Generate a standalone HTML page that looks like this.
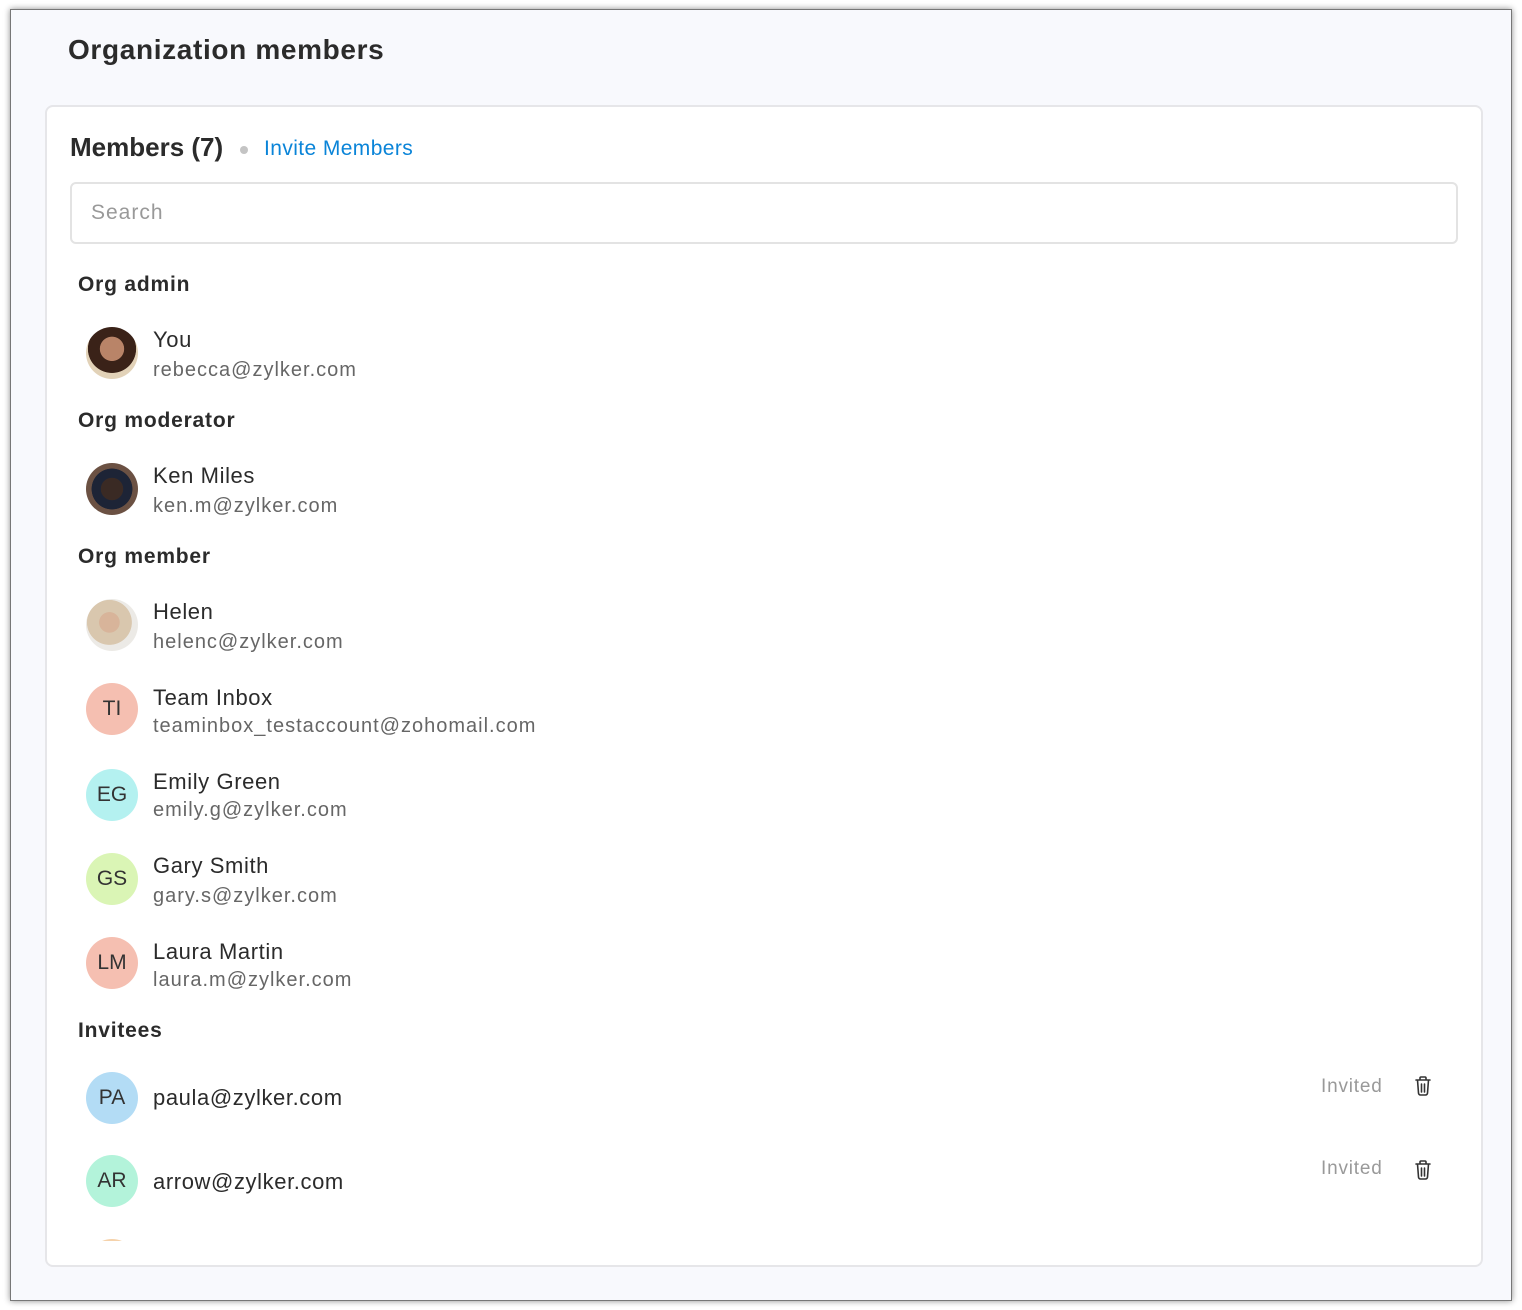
<!DOCTYPE html>
<html><head><meta charset="utf-8"><style>
*{margin:0;padding:0;box-sizing:border-box}
body{width:1522px;height:1310px;background:#fff;font-family:"Liberation Sans",sans-serif;position:relative;overflow:hidden;color:#222}
.win{position:absolute;left:10px;top:9px;width:1502px;height:1292px;background:#f8f9fd;border:1px solid #777;box-shadow:0 0 6px rgba(0,0,0,.45)}
.card{position:absolute;left:45px;top:105px;width:1438px;height:1162px;background:#fff;border:2px solid #e6e6e9;border-radius:8px;overflow:hidden}
.a{position:absolute;white-space:nowrap}
.h1{font-size:28px;font-weight:bold;color:#2b2b2b;letter-spacing:0.65px}
.sec{font-size:21px;font-weight:bold;color:#2b2b2b;letter-spacing:0.8px}
.av{position:absolute;left:86px;width:52px;height:52px;border-radius:50%;font-size:21px;color:#333;display:flex;align-items:center;justify-content:center}
.nm{font-size:22px;color:#2b2b2b;letter-spacing:0.6px}
.em{font-size:20px;color:#666;letter-spacing:1px}
.inv{font-size:19px;color:#999;letter-spacing:0.8px}
</style></head><body>
<div class="win"></div>
<div class="a h1" style="left:68px;top:34px">Organization members</div>
<div class="card"></div>
<div style="position:absolute;left:47px;top:107px;width:1434px;height:1134px;overflow:hidden">
<div style="position:absolute;left:-47px;top:-107px;width:1522px;height:1310px">
<div class="a" style="left:70px;top:132px;font-size:26px;font-weight:bold;color:#2b2b2b">Members (7)</div>
<div class="a" style="left:240px;top:146px;width:8px;height:8px;border-radius:50%;background:#c4c4c4"></div>
<div class="a" style="left:264px;top:137px;font-size:21px;color:#0a84d8;letter-spacing:0.4px">Invite Members</div>
<div class="a" style="left:70px;top:182px;width:1388px;height:62px;border:2px solid #e3e3e3;border-radius:6px"></div>
<div class="a" style="left:91px;top:201px;font-size:21px;color:#999;letter-spacing:1px">Search</div>

<div class="a sec" style="left:78px;top:273px">Org admin</div>
<div class="av" style="top:327px;background:radial-gradient(circle at 50% 42%,#b98468 0 30%,#3a2218 31% 60%,#e2d2b8 61%)"></div>
<div class="a nm" style="left:153px;top:327px">You</div>
<div class="a em" style="left:153px;top:359px">rebecca@zylker.com</div>

<div class="a sec" style="left:78px;top:409px">Org moderator</div>
<div class="av" style="top:463px;background:radial-gradient(circle at 50% 50%,#3a2a24 0 30%,#1d2436 31% 55%,#6b5143 56%)"></div>
<div class="a nm" style="left:153px;top:463px">Ken Miles</div>
<div class="a em" style="left:153px;top:495px">ken.m@zylker.com</div>

<div class="a sec" style="left:78px;top:545px">Org member</div>
<div class="av" style="top:599px;background:radial-gradient(circle at 45% 45%,#d8b49a 0 25%,#d9c7ae 26% 55%,#eceae6 56%)"></div>
<div class="a nm" style="left:153px;top:599px">Helen</div>
<div class="a em" style="left:153px;top:631px">helenc@zylker.com</div>

<div class="av" style="top:683px;background:#f5bfb1">TI</div>
<div class="a nm" style="left:153px;top:685px">Team Inbox</div>
<div class="a em" style="left:153px;top:715px">teaminbox_testaccount@zohomail.com</div>

<div class="av" style="top:769px;background:#b4f1f0">EG</div>
<div class="a nm" style="left:153px;top:769px">Emily Green</div>
<div class="a em" style="left:153px;top:799px">emily.g@zylker.com</div>

<div class="av" style="top:853px;background:#daf5b5">GS</div>
<div class="a nm" style="left:153px;top:853px">Gary Smith</div>
<div class="a em" style="left:153px;top:885px">gary.s@zylker.com</div>

<div class="av" style="top:937px;background:#f5bfb1">LM</div>
<div class="a nm" style="left:153px;top:939px">Laura Martin</div>
<div class="a em" style="left:153px;top:969px">laura.m@zylker.com</div>

<div class="a sec" style="left:78px;top:1019px">Invitees</div>
<div class="av" style="top:1072px;background:#b3dcf5">PA</div>
<div class="a nm" style="left:153px;top:1085px">paula@zylker.com</div>
<div class="av" style="top:1155px;background:#b3f3da">AR</div>
<div class="a nm" style="left:153px;top:1169px">arrow@zylker.com</div>
<div class="av" style="top:1239px;background:#f5d2ab"></div>

<div class="a inv" style="left:1321px;top:1076px">Invited</div>
<div class="a inv" style="left:1321px;top:1158px">Invited</div>
<svg class="a" style="left:1413px;top:1075px" width="20" height="22" viewBox="0 0 20 22" fill="none" stroke="#333" stroke-width="1.6" stroke-linecap="round" stroke-linejoin="round"><path d="M3 5h14M7 5V3a1 1 0 0 1 1-1h4a1 1 0 0 1 1 1v2M4.5 5l1 13a2 2 0 0 0 2 2h5a2 2 0 0 0 2-2l1-13M8.5 9v8M11.5 9v8"/></svg>
<svg class="a" style="left:1413px;top:1159px" width="20" height="22" viewBox="0 0 20 22" fill="none" stroke="#333" stroke-width="1.6" stroke-linecap="round" stroke-linejoin="round"><path d="M3 5h14M7 5V3a1 1 0 0 1 1-1h4a1 1 0 0 1 1 1v2M4.5 5l1 13a2 2 0 0 0 2 2h5a2 2 0 0 0 2-2l1-13M8.5 9v8M11.5 9v8"/></svg>
</div></div>
</body></html>
